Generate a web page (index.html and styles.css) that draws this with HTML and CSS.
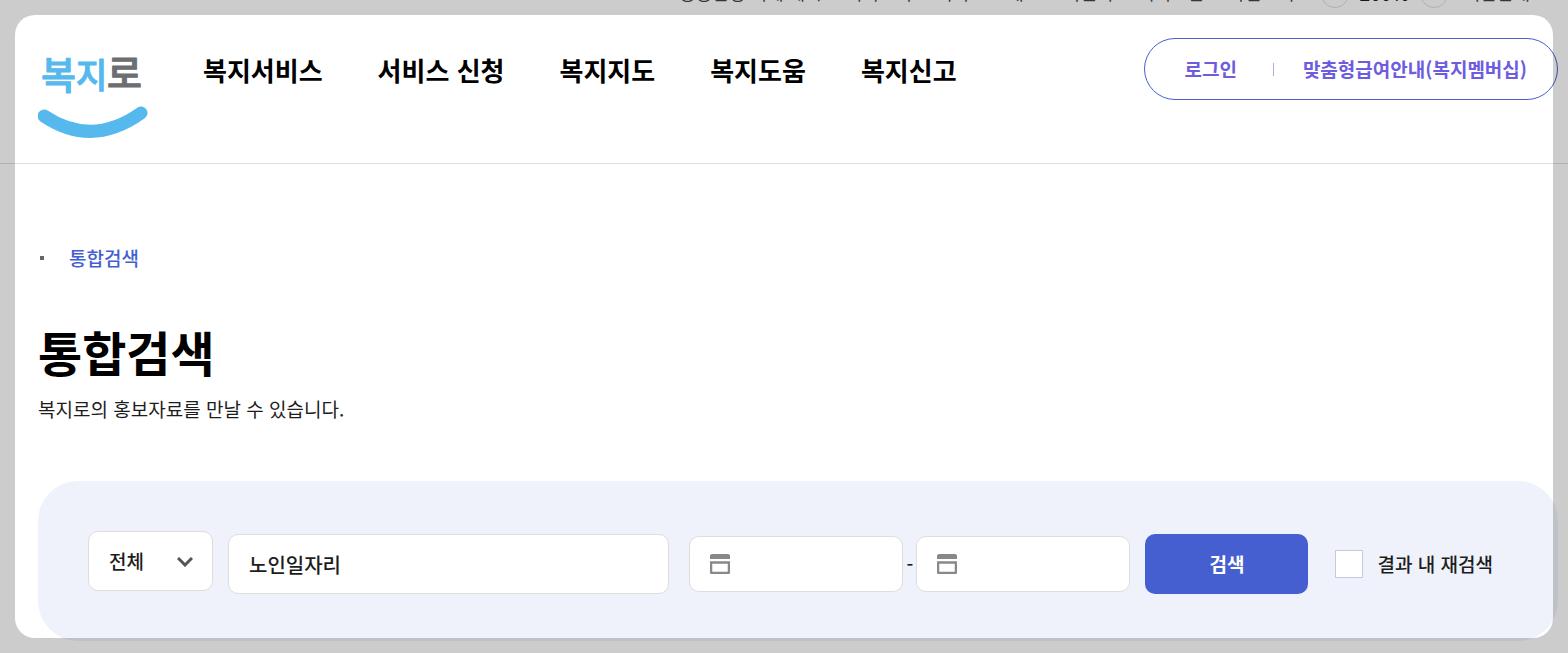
FILE: index.html
```html
<!DOCTYPE html>
<html lang="ko">
<head>
<meta charset="utf-8">
<meta name="viewport" content="width=device-width, initial-scale=1">
<title>통합검색 | 복지로</title>
<link rel="stylesheet" href="styles.css">
</head>
<body>
<div class="page">
  <div class="util">
    <a href="#">공공안정 기세 제시</a>
    <a href="#">서비스지</a>
    <a href="#">서비스 소개도</a>
    <a href="#">다문화</a>
    <a href="#">서비스관</a>
    <span class="label">화면크기</span>
    <div class="zoomer">
      <button type="button" class="round" aria-label="축소">-</button>
      <strong>200%</strong>
      <button type="button" class="round" aria-label="확대">+</button>
    </div>
    <a href="#">기관안내</a>
  </div>

  <header class="header">
    <a class="logo" href="#" aria-label="복지로">
      <svg viewBox="0 0 110 100" width="110" height="100" aria-hidden="true">
        <g class="logo-text">
          <text class="logo-blue" x="3" y="51" font-size="38">복</text>
          <text class="logo-blue" x="38" y="50" font-size="34">지</text>
          <text class="logo-gray" x="69" y="49" font-size="38">로</text>
        </g>
        <path d="M6 78Q54 110 103 75" fill="none" stroke="#55b9ee" stroke-width="13" stroke-linecap="round"/>
      </svg>
    </a>
    <nav class="nav">
      <a href="#">복지서비스</a>
      <a href="#">서비스 신청</a>
      <a href="#">복지지도</a>
      <a href="#">복지도움</a>
      <a href="#">복지신고</a>
    </nav>
    <div class="member">
      <a href="#">로그인</a>
      <span class="divider"></span>
      <a href="#">맞춤형급여안내(복지멤버십)</a>
    </div>
  </header>

  <main class="main">
    <div class="crumbs">
      <span class="dot"></span>
      <a href="#">통합검색</a>
    </div>
    <h1 class="title">통합검색</h1>
    <p class="desc">복지로의 홍보자료를 만날 수 있습니다.</p>

    <form class="search">
      <div class="category">
        <select class="field" aria-label="검색 범위"><option>전체</option></select>
        <svg class="chevron" viewBox="0 0 16 10" width="16" height="10" aria-hidden="true"><path d="M1 1L8 8L15 1" fill="none" stroke="#555" stroke-width="3"/></svg>
      </div>
      <input class="field keyword" type="text" value="노인일자리" aria-label="검색어">
      <div class="period">
        <label class="date">
          <svg viewBox="0 0 20 20" width="20" height="20" aria-hidden="true"><path d="M0 5V2Q0 0 2 0H18Q20 0 20 2V5Z" fill="#888"/><path d="M1 8.500H19V17.500Q19 19 17.500 19H2.500Q1 19 1 17.500Z" fill="none" stroke="#888" stroke-width="2.500"/></svg>
          <input type="text" aria-label="시작일">
        </label>
        <span class="dash">-</span>
        <label class="date">
          <svg viewBox="0 0 20 20" width="20" height="20" aria-hidden="true"><path d="M0 5V2Q0 0 2 0H18Q20 0 20 2V5Z" fill="#888"/><path d="M1 8.500H19V17.500Q19 19 17.500 19H2.500Q1 19 1 17.500Z" fill="none" stroke="#888" stroke-width="2.500"/></svg>
          <input type="text" aria-label="종료일">
        </label>
      </div>
      <button class="submit" type="submit">검색</button>
      <label class="again"><input type="checkbox">결과 내 재검색</label>
    </form>
  </main>
</div>
<div class="frame"></div>
</body>
</html>
```
FILE: styles.css
```css
* { box-sizing: border-box; }

body {
  margin: 0;
  background: #fff;
  color: #1d1d1d;
  font-family: "Noto Sans CJK KR", "Noto Sans", sans-serif;
  font-size: 19px;
  line-height: 28px;
}

a { color: inherit; text-decoration: none; }
input, select, button { font: inherit; color: inherit; }

.page { min-height: 100vh; overflow: hidden; }

/* Rounded viewport frame that dims everything outside it */
.frame {
  position: fixed;
  inset: 15px;
  border-radius: 20px;
  box-shadow: 0 0 0 40px rgba(0, 0, 0, 0.2);
  pointer-events: none;
}

.util {
  display: flex;
  justify-content: flex-end;
  align-items: flex-end;
  gap: 24px;
  height: 8px;
  padding-right: 38px;
  color: #444;
  font-size: 18px;
  white-space: nowrap;
}
.util > a, .label { height: 28px; line-height: 24px; }
.zoomer { display: flex; gap: 11px; height: 28px; margin: 0 -8px 0 2px; }
.zoomer strong { color: #1d1d1d; line-height: 26px; }
.round {
  width: 28px;
  height: 28px;
  padding: 0;
  border: 1px solid #ddd;
  border-radius: 50%;
  background: transparent;
  line-height: 24px;
}

.header {
  display: flex;
  align-items: flex-start;
  padding: 30px 10px 25px 38px;
  border-bottom: 1px solid #ddd;
}
.logo { display: block; height: 100px; }
.logo svg { display: block; }
.logo-text { font-weight: 500; stroke-width: 1; stroke-linejoin: round; }
.logo-blue { fill: #55b9ee; stroke: #55b9ee; }
.logo-gray { fill: #6d6e71; stroke: #6d6e71; }

.nav {
  display: flex;
  gap: 55px;
  margin-left: 55px;
  color: #000;
  font-size: 26px;
  font-weight: 700;
  line-height: 64px;
  white-space: nowrap;
}

.member {
  display: flex;
  align-items: center;
  height: 62px;
  margin-left: auto;
  padding: 0 30px 0 39px;
  border: 1px solid #465fd0;
  border-radius: 31px;
  color: #6e5ce0;
  font-weight: 700;
  white-space: nowrap;
}
.divider {
  width: 1px;
  height: 13px;
  margin: 0 29px 0 36px;
  background: #b5aaf0;
}

.main { padding: 80px 10px 12px 38px; }
.crumbs { display: flex; align-items: center; gap: 25px; color: #465fd0; font-weight: 500; }
.dot { width: 4px; height: 4px; margin-left: 2px; background: #666; }
.title {
  margin: 44px 0 0;
  color: #000;
  font-size: 48px;
  font-weight: 700;
  line-height: 70px;
}
.desc { margin: 9px 0 0; }

.search {
  display: flex;
  align-items: flex-end;
  margin-top: 58px;
  padding: 50px 65px 47px 50px;
  border-radius: 40px;
  background: #eff2fa;
  font-weight: 500;
}
.field {
  height: 60px;
  border: 1px solid #ddd;
  border-radius: 10px;
  background: #fff;
}
.category { position: relative; flex: none; height: 63px; margin-right: 15px; }
.category .field {
  width: 125px;
  padding: 0 20px;
  appearance: none;
}
.chevron { position: absolute; top: 26px; right: 20px; pointer-events: none; }
.keyword {
  flex: 1;
  min-width: 0;
  margin-right: 20px;
  padding: 0 20px;
  font-size: 20px;
}

.period { display: flex; align-items: center; height: 60px; margin-right: 15px; }
.date {
  display: flex;
  align-items: center;
  gap: 12px;
  width: 214px;
  height: 56px;
  padding: 0 20px;
  border: 1px solid #ddd;
  border-radius: 10px;
  background: #fff;
}
.date svg { flex: none; }
.date input { width: 100%; min-width: 0; padding: 0; border: 0; background: none; }
.dash { width: 13px; text-align: center; }

.submit {
  flex: none;
  width: 163px;
  height: 60px;
  border: 0;
  border-radius: 10px;
  background: #465fd0;
  color: #fff;
  font-weight: 700;
}

.again {
  display: flex;
  flex: none;
  align-items: center;
  gap: 14px;
  height: 60px;
  margin-left: 27px;
}
.again input {
  width: 28px;
  height: 28px;
  margin: 0;
  border: 1px solid #c5c8de;
  background: #fff;
  appearance: none;
}
.again input:checked { background: #465fd0; }
```
